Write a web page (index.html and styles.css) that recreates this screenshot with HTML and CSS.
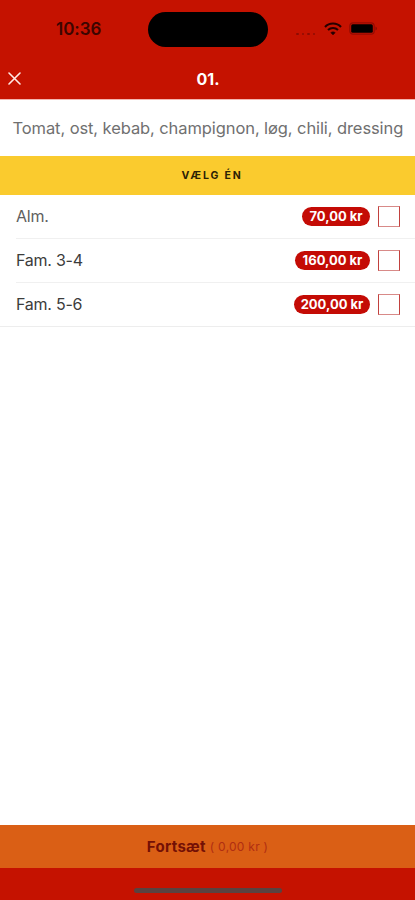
FILE: index.html
```html
<!DOCTYPE html>
<html lang="da">
<head>
<meta charset="utf-8">
<meta name="viewport" content="width=device-width">
<title>01.</title>
<link rel="stylesheet" href="styles.css">
</head>
<body>
<div class="screen">
  <header class="top">
    <div class="status">
      <span class="time">10:36</span>
      <span class="island"></span>
      <span class="indicators">
        <span class="signal"><i></i><i></i><i></i><i></i></span>
        <svg class="wifi" width="18" height="13" viewBox="0 0 18 13" fill="none" stroke="#250000" stroke-width="2.1">
          <path d="M1 4.900C5.300.4 12.700.4 17 4.900"/>
          <path d="M4 8.100c2.800-2.800 7.200-2.800 10 0"/>
          <path d="M9 12.900 6.700 10.700c1.300-1.300 3.300-1.300 4.600 0z" fill="#250000" stroke="#250000" stroke-width=".4"/>
        </svg>
        <svg class="battery" width="29" height="13" viewBox="0 0 29 13">
          <rect x=".8" y=".8" width="24.400" height="11.400" rx="3.200" fill="none" stroke="#950b02" stroke-width="1.200"/>
          <rect x="2.200" y="2.200" width="21.600" height="8.600" rx="1.500" fill="#000"/>
          <path d="M26.500 4.500c1.800.7 1.800 3.300 0 4z" fill="#850a02"/>
        </svg>
      </span>
    </div>
    <div class="nav">
      <svg class="close" width="13" height="13" viewBox="0 0 13 13" stroke="#ffe9e4" stroke-width="1.600" stroke-linecap="round"><path d="M1 1l11 11M12 1 1 12"/></svg>
      <h1 class="title">01.</h1>
    </div>
  </header>
  <main class="content">
    <p class="description">Tomat, ost, kebab, champignon, løg, chili, dressing</p>
    <h2 class="section">VÆLG ÉN</h2>
    <ul class="options">
      <li class="option"><span class="name name-light">Alm.</span><span class="price price-70">70,00 kr</span><span class="box"></span></li>
      <li class="option"><span class="name">Fam. 3-4</span><span class="price price-160">160,00 kr</span><span class="box"></span></li>
      <li class="option"><span class="name">Fam. 5-6</span><span class="price price-200">200,00 kr</span><span class="box"></span></li>
    </ul>
  </main>
  <footer class="bottom">
    <div class="continue"><strong>Fortsæt</strong><span class="total">( 0,00 kr )</span></div>
    <div class="home"><span class="handle"></span></div>
  </footer>
</div>
</body>
</html>
```
FILE: styles.css
```css
* { box-sizing: border-box; }
body { margin: 0; background: #fff; font-family: Inter, "Liberation Sans", sans-serif; }
.screen { width: 415px; height: 900px; display: flex; flex-direction: column; overflow: hidden; }
.top { height: 100px; flex: none; background: #c51200; border-bottom: 1px solid #f4b5b0; }
.status { height: 58px; display: grid; grid-template-columns: 148px 120px 1fr; align-items: center; }
.time { padding-left: 56px; font-size: 17px; line-height: 20px; font-weight: 600; color: #3c0500; letter-spacing: -.05px; }
.island { height: 35px; border-radius: 18px; background: #000; }
.indicators { display: flex; align-items: center; padding-left: 28px; margin-top: -2px; }
.signal { display: flex; gap: 3px; width: 20px; margin: 11px 8px 0 0; }
.signal i { width: 2.500px; height: 2px; border-radius: 1px; background: #8d0c03; }
.wifi { margin-right: 7px; flex: none; }
.battery { flex: none; }
.nav { height: 41px; display: grid; grid-template-columns: 148px 120px 1fr; align-items: center; }
.close { margin-left: 8px; }
.title { margin: 0; text-align: center; font-size: 16px; line-height: 20px; font-weight: 700; color: #fff; }
.content { flex: 1; }
.description { margin: 0; height: 56px; padding-left: 12.500px; line-height: 57px; font-size: 16.500px; letter-spacing: -.09px; color: #707070; white-space: nowrap; }
.section { margin: 0; height: 39px; background: #facb2e; color: #2b2205; text-align: center; font-size: 10.500px; line-height: 39px; font-weight: 700; letter-spacing: 1.850px; padding-left: 9px; }
.options { margin: 0; padding: 0 0 0 16px; list-style: none; border-bottom: 1px solid #ededed; }
.option { height: 44px; display: flex; align-items: center; padding-right: 15px; border-bottom: 1px solid #f0f0f0; }
.option:last-child { height: 43px; border-bottom: 0; }
.name { flex: 1; font-size: 16px; line-height: 20px; padding-bottom: 2px; letter-spacing: -.25px; color: #3c3c3c; }
.name-light { color: #606060; }
.price { height: 19px; border-radius: 10px; background: #c40b05; color: #fff; font-size: 13px; line-height: 19px; font-weight: 700; text-align: center; white-space: nowrap; margin-right: 8px; }
.price-70 { width: 68px; }
.price-160 { width: 75px; }
.price-200 { width: 76px; }
.box { width: 22px; height: 21px; border: 1px solid #d88a88; border-left-color: #c2413e; border-right-color: #c2413e; }
.bottom { flex: none; height: 75px; background: #c51200; }
.continue { height: 43px; display: flex; justify-content: center; align-items: center; gap: 4px; background: #da5f15; color: #741005; }
.continue strong { font-size: 15px; font-weight: 700; letter-spacing: .3px; }
.total { font-size: 12px; letter-spacing: .25px; color: #b02e12; }
.home { height: 32px; display: flex; justify-content: center; padding-top: 20px; }
.handle { width: 148px; height: 5px; border-radius: 3px; background: #594240; }
```
